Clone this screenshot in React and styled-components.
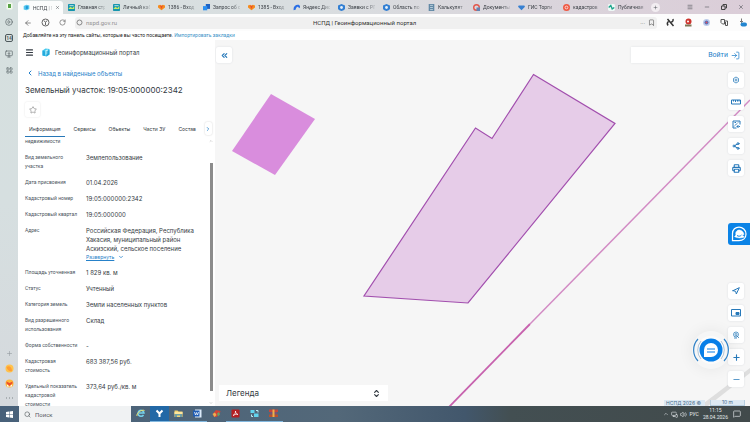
import React from "react";
import styled, { createGlobalStyle } from "styled-components";
import {
  ArrowLeft,
  Bookmark,
  ChevronDown,
  ChevronLeft,
  ChevronRight,
  ChevronUp,
  ChevronsLeft,
  ChevronsUpDown,
  CirclePlay,
  LayoutGrid,
  LogIn,
  Menu,
  Minus,
  MonitorDown,
  MessageSquare,
  MonitorSmartphone,
  Navigation,
  Plus,
  Printer,
  RotateCw,
  Search,
  Share2,
  Star,
  Volume2,
  X,
} from "lucide-react";

const GlobalStyle = createGlobalStyle`
  * { box-sizing: border-box; }

  body {
    margin: 0;
    font-family: Roboto, "Liberation Sans", sans-serif;
    color: #333a42;
    overflow: hidden;
  }

  button, input {
    font: inherit;
    color: inherit;
    border: none;
    background: none;
    padding: 0;
    margin: 0;
  }

  button { cursor: pointer; }
  svg { display: block; flex-shrink: 0; }
`;

// Shell
const Screen = styled.div`
  display: flex;
  flex-direction: column;
  height: 100vh;
  background: linear-gradient(90deg, #d7e0e0 0%, #d9dee0 40%, #dbcdd8 100%);
`;

const Workspace = styled.div`
  display: flex;
  flex: 1;
  min-height: 0;
`;

const Browser = styled.div`
  display: flex;
  flex-direction: column;
  flex: 1;
  min-width: 0;
`;

const Content = styled.div`
  display: flex;
  flex: 1;
  min-height: 0;
`;

// Browser side bar
const SideBar = styled.nav`
  width: 18px;
  padding: 2px 0 4px;
  display: flex;
  flex-direction: column;
  align-items: center;
  justify-content: space-between;
  background: linear-gradient(#d6e0df, #d6dfe0 50%, #d5d9dd);
  color: #586265;
`;

const SideGroup = styled.div`
  display: flex;
  flex-direction: column;
  align-items: center;
  gap: ${(p) => p.$gap}px;
`;

const SideButton = styled.button`
  width: 9px;
  height: 8px;
  display: flex;
  align-items: center;
  justify-content: center;
`;

const Counter = styled.span`
  width: 8px;
  height: 8px;
  border: 1px solid #4d585b;
  border-radius: 2px;
  font-size: 5px;
  font-weight: 700;
  line-height: 6px;
  text-align: center;
`;

const Profile = styled.span`
  width: 7px;
  height: 8px;
  border-radius: 2px;
  background: #f4faf2;
  border: 1px solid #e3efe2;
  display: grid;
  place-items: center;

  &::after {
    content: "";
    width: 3px;
    height: 4px;
    background: #58a344;
  }
`;

// Tabs
const TabStrip = styled.div`
  display: flex;
  height: 14px;
  font-size: 5px;
  line-height: 14px;
  color: #3a3f45;
`;

const Tab = styled.button`
  flex: 0 1 45px;
  min-width: 0;
  display: flex;
  align-items: center;
  gap: 3px;
  padding: 0 3px 0 5px;
  margin-top: ${(p) => (p.$active ? "1px" : "0")};
  border-radius: 3px 3px 0 0;
  background: ${(p) => (p.$active ? "#fbfcfc" : "transparent")};
`;

const TabText = styled.span`
  flex: 1;
  min-width: 0;
  white-space: nowrap;
  text-align: left;
  mask-image: linear-gradient(90deg, #000 70%, rgba(0, 0, 0, 0.2));
`;

const NewTab = styled.button`
  align-self: center;
  width: 9px;
  height: 9px;
  margin-left: 3px;
  border-radius: 50%;
  background: #f2edf1;
  display: grid;
  place-items: center;
`;

const WindowButtons = styled.div`
  display: flex;
  align-items: center;
  gap: 11px;
  margin-left: auto;
  padding-right: 6px;
`;

// Address row
const AddressRow = styled.div`
  display: flex;
  align-items: center;
  height: 17px;
  padding: 0 3px 0 6px;
  gap: 9px;
  background: #fcfcfc;
  color: #555;
`;

const AddressField = styled.div`
  flex: 1;
  height: 12px;
  display: flex;
  align-items: center;
  gap: 3px;
  padding: 0 2px 0 1px;
  border-radius: 3px;
  background: #f0f0f0;
  font-size: 6px;
`;

const AddressInput = styled.input`
  width: 60px;
  color: #929292;
  outline: none;
`;

const PageTitle = styled.span`
  flex: 1;
  padding-left: 164px;
  color: #333;
`;

const Extensions = styled.div`
  display: flex;
  align-items: center;
  gap: 9px;
`;

const BookmarkHint = styled.div`
  height: 9px;
  padding-left: 5px;
  font-size: 5px;
  line-height: 9px;
  color: #222;
  background: #fff;

  a {
    color: #3c93c8;
    text-decoration: none;
  }
`;

// Object panel
const Panel = styled.aside`
  width: 197px;
  display: flex;
  flex-direction: column;
  background: #fff;
  font-family: Inter, "Liberation Sans", sans-serif;
`;

const PanelHead = styled.header`
  display: flex;
  align-items: center;
  gap: 8px;
  height: 24px;
  padding-left: 7px;
  font-size: 6px;
`;

const Brand = styled.span`
  display: flex;
  align-items: center;
  gap: 5px;
`;

const BackLink = styled.a`
  display: flex;
  align-items: center;
  gap: 4px;
  height: 18px;
  padding-left: 8px;
  font-size: 6px;
  color: #2681c9;
  text-decoration: none;
`;

const ObjectTitle = styled.h1`
  margin: 0;
  padding-left: 7px;
  font-size: 8px;
  font-weight: 400;
  line-height: 16px;
`;

const FavButton = styled.button`
  width: 15px;
  height: 15px;
  margin: 4px 0 5px 7px;
  border-radius: 2px;
  box-shadow: 0 0 2px rgba(0, 0, 0, 0.12);
  display: grid;
  place-items: center;
  color: #888;
`;

const InfoTabs = styled.div`
  display: flex;
  align-items: stretch;
  height: 15px;
  padding-left: 7px;
  font-size: 5px;
`;

const InfoTab = styled.button`
  padding: 0 4px;
  margin-right: 5px;
  border-bottom: 1px solid ${(p) => (p.$active ? "#2878b8" : "transparent")};
  white-space: nowrap;
`;

const MoreTabs = styled.button`
  width: 13px;
  height: 13px;
  margin-left: auto;
  margin-right: 3px;
  border-radius: 2px;
  background: #fff;
  box-shadow: 0 0 2px rgba(0, 0, 0, 0.2);
  color: #2681c9;
  display: grid;
  place-items: center;
`;

const ScrollArea = styled.div`
  flex: 1;
  min-height: 0;
  display: flex;
`;

const Facts = styled.dl`
  flex: 1;
  margin: 0;
  padding-left: 7px;
  display: flex;
  flex-direction: column;
  gap: 7px;
  overflow: hidden;
`;

const Fact = styled.div`
  display: grid;
  flex-shrink: 0;
  grid-template-columns: 61px 1fr;
  line-height: 9px;
`;

const FactLabel = styled.dt`
  font-family: Roboto, sans-serif;
  font-size: 5px;
  padding-right: 7px;
  color: #4c5560;
`;

const FactValue = styled.dd`
  margin: 0;
  padding-right: 6px;
  font-size: 6px;
`;

const Expand = styled.button`
  display: flex;
  align-items: center;
  gap: 4px;
  font-size: 5px;
  line-height: 8px;
  color: #2681c9;
  text-decoration: underline;
`;

const ScrollBar = styled.div`
  width: 8px;
  display: flex;
  flex-direction: column;
  align-items: center;
  justify-content: space-between;
  padding: 2px 0 1px;
  color: #888;
`;

const ScrollThumb = styled.span`
  flex: 1;
  width: 3px;
  margin: 20px 0 10px;
  background: #8c8c8c;
`;

// Map
const MapArea = styled.main`
  position: relative;
  flex: 1;
  min-width: 0;
  overflow: hidden;
  background: #f6f6f6;
`;

const MapDrawing = styled.svg`
  position: absolute;
  inset: 0;
  width: 100%;
  height: 100%;
`;

const MapOverlay = styled.div`
  position: absolute;
  inset: 0;
  display: flex;
  flex-direction: column;
  justify-content: space-between;
`;

const MapTop = styled.div`
  display: flex;
  justify-content: space-between;
  align-items: flex-start;
  padding: 7px 6px 0 1px;
`;

const MapButton = styled.button`
  width: 16px;
  height: 16px;
  display: grid;
  place-items: center;
  border-radius: 2px;
  background: #fff;
  box-shadow: 0 0 2px rgba(60, 80, 110, 0.16);
  color: #2779ba;
`;

const LoginBar = styled.div`
  width: 113px;
  height: 16px;
  padding-right: 4px;
  display: flex;
  justify-content: flex-end;
  align-items: center;
  background: #fff;
  box-shadow: 0 0 2px rgba(60, 80, 110, 0.12);
  color: #2681c9;
  font-size: 7px;
`;

const LoginButton = styled.button`
  display: flex;
  align-items: center;
  gap: 3px;
`;

const Tools = styled.div`
  display: flex;
  flex-direction: column;
  gap: 6px;
`;

const MapRight = styled.div`
  flex: 1;
  display: flex;
  flex-direction: column;
  justify-content: space-between;
  align-items: flex-end;
  padding: 9px 6px 0;
`;

const MapBottom = styled.div`
  display: flex;
  justify-content: space-between;
  align-items: flex-end;
  margin-top: -2px;
`;

const Legend = styled.button`
  width: 169px;
  height: 16px;
  margin: 0 0 5px 4px;
  padding: 0 7px;
  display: flex;
  align-items: center;
  justify-content: space-between;
  background: #fff;
  font-family: Inter, sans-serif;
  font-size: 8px;
`;

const Attribution = styled.div`
  display: flex;
  gap: 5px;
  padding: 0 5px 0 0;
  font-family: Inter, sans-serif;
  font-size: 5px;
  line-height: 6px;
  color: #476d8d;
`;

const Copyright = styled.span`
  padding: 0 4px 0 2px;
  background: #dce9f3;
`;

const ScaleLine = styled.span`
  width: 35px;
  text-align: center;
  background: #dce9f3;
  border: 1px solid #b7cfe1;
  border-top: none;
  line-height: 5px;
`;

const Assistant = styled.button`
  position: absolute;
  right: 0;
  top: 183px;
  width: 22px;
  height: 22px;
  border-radius: 3px 0 0 3px;
  background: #0b83e6;
  display: grid;
  place-items: center;
`;

const ChatButton = styled.button`
  position: absolute;
  right: 20px;
  bottom: 37px;
  width: 38px;
  height: 38px;
  border-radius: 50%;
  box-shadow: 0 0 16px rgba(0, 0, 0, 0.07);
`;

// Windows taskbar
const TaskBar = styled.footer`
  height: 16px;
  display: flex;
  align-items: stretch;
  background: linear-gradient(90deg, #48617a 0%, #536879 45%, #42576c 62%, #434f52 68%, #414a4b 100%);
  color: #e7ebee;
`;

const StartButton = styled.button`
  width: 19px;
  display: grid;
  place-items: center;
`;

const SearchBox = styled.label`
  width: 112px;
  display: flex;
  align-items: center;
  gap: 4px;
  padding-left: 5px;
  background: #f0f2f3;
  color: #4c5256;
  font-size: 6px;

  input {
    width: 80px;
    outline: none;
  }

  input::placeholder {
    color: #5b6064;
    opacity: 1;
  }
`;

const TaskApp = styled.button`
  width: 19px;
  display: grid;
  place-items: center;
  background: ${(p) => (p.$active ? "#2268a6" : "transparent")};
  border-bottom: 1px solid ${(p) => (p.$open ? "#82b8df" : "transparent")};
`;

const Tray = styled.div`
  margin-left: auto;
  display: flex;
  align-items: center;
  gap: 2px;
  padding-right: 9px;
  font-size: 5px;
`;

const Clock = styled.time`
  margin: 0 3px 0 2px;
  line-height: 7px;
  text-align: center;
`;

const tabs = [
  { text: "НСПД | Г", kind: "nspd", active: true },
  { text: "Главная стр", kind: "square" },
  { text: "Личный каб", kind: "square" },
  { text: "1386 - Вход", kind: "heart" },
  { text: "Запрос об о", kind: "docs" },
  { text: "1385 - Вход", kind: "heart" },
  { text: "Яндекс Дис", kind: "disk" },
  { text: "Заявки с РП", kind: "shield" },
  { text: "Область по", kind: "shield" },
  { text: "Калькулят", kind: "calc" },
  { text: "Документы", kind: "ring" },
  { text: "ГИС Торги", kind: "gem" },
  { text: "кадастров", kind: "yandex" },
  { text: "Публичная", kind: "public" },
];

const facts = [
  { label: "Вид земельного участка", value: "Землепользование" },
  { label: "Дата присвоения", value: "01.04.2026" },
  { label: "Кадастровый номер", value: "19:05:000000:2342" },
  { label: "Кадастровый квартал", value: "19:05:000000" },
  {
    label: "Адрес",
    value: "Российская Федерация, Республика Хакасия, муниципальный район Аскизский, сельское поселение",
    expandable: true,
  },
  { label: "Площадь уточненная", value: "1 829 кв. м" },
  { label: "Статус", value: "Учтенный" },
  { label: "Категория земель", value: "Земли населенных пунктов" },
  { label: "Вид разрешенного использования", value: "Склад" },
  { label: "Форма собственности", value: "-" },
  { label: "Кадастровая стоимость", value: "683 387,56 руб." },
  { label: "Удельный показатель кадастровой стоимости", value: "373,64 руб./кв. м" },
];

const tabIcons = {
  nspd: (
    <>
      <path d="M1 3l4-2 4 1v5L5 9 1 8z" fill="#56c8ee" />
      <path d="M4 3h3v4H4z" fill="#2196d8" />
    </>
  ),
  square: (
    <>
      <rect width="10" height="10" rx="1" fill="#1695ae" />
      <path d="M1 6l3-2 2 2 3-3v4H1z" fill="#c7ec66" />
      <path d="M2 2h6v1H2z" fill="#fff" />
    </>
  ),
  heart: (
    <>
      <path d="M0 2l3-1 2 1 2-1 3 1v3L5 9 0 5z" fill="#f58b1f" />
      <path d="M3 2l2 1 2-1-2 5z" fill="#e94b2d" />
    </>
  ),
  docs: (
    <>
      <path d="M4 0h6v7H4z" fill="#1d62c4" />
      <path d="M0 3h6v6H0z" fill="#2b8ff1" />
    </>
  ),
  disk: <path d="M1 9C0 4 3 1 7 1c3 0 4 3 2 5L7 4C5 4 4 6 4 8z" fill="#2b6fe5" />,
  shield: (
    <>
      <path d="M5 0l5 2v4c0 2-2 3-5 4C2 9 0 8 0 6V2z" fill="#327fd3" />
      <circle cx="5" cy="5" r="2" fill="#e4f0fa" />
    </>
  ),
  calc: (
    <>
      <rect x="1" width="8" height="10" fill="#6289a5" />
      <path d="M3 2h4M3 5h4M3 8h4" stroke="#dceaf1" />
    </>
  ),
  ring: (
    <>
      <circle cx="5" cy="5" r="4" fill="none" stroke="#e2564b" strokeWidth="2" />
      <path d="M5 5h5v5H5z" fill="#6483b2" />
    </>
  ),
  gem: <path d="M1 2h8l1 2-5 5-5-5z" fill="#3880d1" />,
  yandex: (
    <>
      <circle cx="5" cy="5" r="5" fill="#ef5944" />
      <circle cx="5" cy="5" r="2" fill="none" stroke="#fff" />
    </>
  ),
  public: (
    <>
      <rect width="10" height="10" rx="2" fill="#eef8f6" />
      <path d="M1 5l3-3 2 5 3-2" fill="none" stroke="#20a58c" strokeWidth="2" />
    </>
  ),
};

function Favicon({ kind }) {
  return (
    <svg width="7" height="7" viewBox="0 0 10 10">
      {tabIcons[kind]}
    </svg>
  );
}

function NspdLogo() {
  return (
    <svg width="8" height="9" viewBox="0 0 16 18">
      <path d="M1 5l6-4 8 1v11l-6 4-8-2z" fill="#43c8ee" />
      <path d="M1 5l5 2v9l-5-1z" fill="#25a9dd" />
      <path d="M7 4l5-1v8l-5 3z" fill="#c8f6fb" />
      <path d="M9 6l6-2v9l-6 4z" fill="#1598cf" opacity=".7" />
    </svg>
  );
}

function BrowserSideBar() {
  return (
    <SideBar>
      <SideGroup $gap={8}>
        <Profile />
        <SideButton aria-label="Видео"><CirclePlay size={8} /></SideButton>
        <Counter>14</Counter>
        <SideButton aria-label="Загрузки"><MonitorDown size={8} /></SideButton>
        <SideButton aria-label="Приложения"><LayoutGrid size={7} /></SideButton>
      </SideGroup>
      <SideGroup $gap={7}>
        <SideButton aria-label="Добавить"><Plus size={7} color="#929a9e" /></SideButton>
        <SideButton aria-label="Заметки">
          <svg width="9" height="9" viewBox="0 0 18 18">
            <circle cx="9" cy="9" r="8" fill="#ffc34d" />
            <path d="M3 6c5-4 11 0 11 8-3 2-9 0-11-8z" fill="#ff9f35" />
          </svg>
        </SideButton>
        <SideButton aria-label="Почта">
          <svg width="9" height="9" viewBox="0 0 18 18">
            <circle cx="9" cy="9" r="8" fill="#ffb638" />
            <path d="M3 5l6 3 6-3v4l-6 5-6-5z" fill="#ed502b" />
            <path d="M4 11l5 4 5-4v4H4z" fill="#fff" />
          </svg>
        </SideButton>
        <SideButton aria-label="Ещё">
          <svg width="8" height="2" viewBox="0 0 8 2">
            <path d="M1 1h1M4 1h1M7 1h1" stroke="#7c8487" />
          </svg>
        </SideButton>
      </SideGroup>
    </SideBar>
  );
}

function BrowserTop() {
  return (
    <>
      <TabStrip>
        {tabs.map((tab, i) => (
          <Tab key={i} $active={tab.active}>
            <Favicon kind={tab.kind} />
            <TabText>{tab.text}</TabText>
            {tab.active && <X size={5} />}
          </Tab>
        ))}
        <NewTab aria-label="Новая вкладка"><Plus size={5} /></NewTab>
        <WindowButtons>
          <button aria-label="Меню"><Menu size={6} /></button>
          <button aria-label="Свернуть"><Minus size={6} /></button>
          <button aria-label="Развернуть">
            <svg width="6" height="6" viewBox="0 0 12 12" fill="none" stroke="#444" strokeWidth="2">
              <path d="M1 4h7v7H1zM4 4V1h7v7H8" />
            </svg>
          </button>
          <button aria-label="Закрыть"><X size={6} /></button>
        </WindowButtons>
      </TabStrip>
      <AddressRow>
        <button aria-label="Назад"><ArrowLeft size={8} /></button>
        <button aria-label="Яндекс">
          <svg width="9" height="9" viewBox="0 0 18 18" fill="none" stroke="#666" strokeWidth="2">
            <circle cx="9" cy="9" r="7" />
            <path d="M6 5l3 4 3-4M9 9v5" />
          </svg>
        </button>
        <button aria-label="Обновить"><RotateCw size={7} /></button>
        <AddressField>
          <svg width="7" height="7" viewBox="0 0 14 14" fill="none" stroke="#888" strokeWidth="2">
            <circle cx="7" cy="7" r="5" />
          </svg>
          <AddressInput aria-label="Адрес" defaultValue="nspd.gov.ru" />
          <PageTitle>НСПД | Геоинформационный портал</PageTitle>
          <span>···</span>
          <button aria-label="Закладка"><Bookmark size={7} /></button>
        </AddressField>
        <Extensions>
          <svg width="9" height="9" viewBox="0 0 18 18" stroke="#333" strokeWidth="3" fill="none">
            <path d="M3 2l12 14M14 2c1 5-2 6-4 6M5 7c-3 2-3 5-1 8" />
          </svg>
          <svg width="9" height="9" viewBox="0 0 18 18">
            <circle cx="9" cy="7" r="6" fill="#cc342d" />
            <path d="M2 13h13v4H2z" fill="#7f7656" />
            <circle cx="8" cy="7" r="2" fill="#fff" />
          </svg>
          <svg width="9" height="9" viewBox="0 0 18 18">
            <circle cx="9" cy="9" r="7" fill="#bccbea" />
            <circle cx="9" cy="9" r="4" fill="#5474bc" />
            <circle cx="9" cy="9" r="2" fill="#db4e5d" />
          </svg>
          <svg width="9" height="9" viewBox="0 0 18 18" fill="none" stroke="#555" strokeWidth="2">
            <path d="M2 3h7v9H5L2 9zM9 6h6v9h-4V8" />
          </svg>
          <svg width="9" height="9" viewBox="0 0 18 18">
            <path d="M7 1v8M4 6l3 3 3-3" fill="none" stroke="#777" strokeWidth="2" />
            <rect x="5" y="9" width="13" height="8" rx="4" fill="#2386d0" />
          </svg>
        </Extensions>
      </AddressRow>
      <BookmarkHint>
        Добавляйте на эту панель сайты, которые вы часто посещаете. <a href="#import">Импортировать закладки</a>
      </BookmarkHint>
    </>
  );
}

function ObjectPanel() {
  return (
    <Panel>
      <PanelHead>
        <button aria-label="Меню"><Menu size={9} strokeWidth={3} /></button>
        <Brand>
          <NspdLogo />
          Геоинформационный портал
        </Brand>
      </PanelHead>
      <BackLink href="#back">
        <ChevronLeft size={8} strokeWidth={3} />
        Назад в найденные объекты
      </BackLink>
      <ObjectTitle>Земельный участок: 19:05:000000:2342</ObjectTitle>
      <FavButton aria-label="В избранное"><Star size={8} /></FavButton>
      <InfoTabs>
        <InfoTab $active>Информация</InfoTab>
        <InfoTab>Сервисы</InfoTab>
        <InfoTab>Объекты</InfoTab>
        <InfoTab>Части ЗУ</InfoTab>
        <InfoTab>Состав</InfoTab>
        <MoreTabs aria-label="Ещё вкладки"><ChevronRight size={6} strokeWidth={3} /></MoreTabs>
      </InfoTabs>
      <ScrollArea>
        <Facts>
          <Fact>
            <FactLabel>недвижимости</FactLabel>
          </Fact>
          {facts.map((fact) => (
            <Fact key={fact.label}>
              <FactLabel>{fact.label}</FactLabel>
              <FactValue>
                {fact.value}
                {fact.expandable && (
                  <Expand>
                    Развернуть <ChevronDown size={6} strokeWidth={3} />
                  </Expand>
                )}
              </FactValue>
            </Fact>
          ))}
        </Facts>
        <ScrollBar>
          <ChevronUp size={4} />
          <ScrollThumb />
          <ChevronDown size={4} />
        </ScrollBar>
      </ScrollArea>
    </Panel>
  );
}

function LandMap() {
  return (
    <MapArea>
      <MapDrawing viewBox="215 40 535 366" preserveAspectRatio="xMidYMid slice">
        <path d="M700 406l50-38v5l-42 33z" fill="#dedede" />
        <path d="M271 94l44 25-40 56-43-24z" fill="#d98ddd" />
        <path
          d="M533.500 74.500L615 123.500 468 303 364 296 475.500 128 492 138.500z"
          fill="#e6cce8"
          stroke="#a24fae"
          strokeWidth="1.200"
        />
        <path d="M449 407L530 324" stroke="#c762ae" strokeWidth="1.800" />
        <path d="M530 324L750 100" stroke="#d28bc4" strokeWidth="1.500" />
      </MapDrawing>
      <MapOverlay>
        <MapTop>
          <MapButton aria-label="Скрыть панель"><ChevronsLeft size={9} strokeWidth={3} /></MapButton>
          <LoginBar>
            <LoginButton>
              Войти <LogIn size={9} />
            </LoginButton>
          </LoginBar>
        </MapTop>
        <MapRight>
          <Tools>
            <MapButton aria-label="Слои">
              <svg width="8" height="8" viewBox="0 0 16 16" fill="none" stroke="currentColor" strokeWidth="1.500">
                <path d="M8 2l5 3v6l-5 3-5-3V5z" />
                <circle cx="8" cy="8" r="2" />
              </svg>
            </MapButton>
            <MapButton aria-label="Линейка">
              <svg width="10" height="8" viewBox="0 0 20 16" fill="none" stroke="currentColor" strokeWidth="2">
                <path d="M1 4h18v8H1zM5 4v3M9 4v4M13 4v3M16 4v3" />
              </svg>
            </MapButton>
            <MapButton aria-label="Выделить область">
              <svg width="9" height="9" viewBox="0 0 18 18" fill="none" stroke="currentColor" strokeWidth="2">
                <path d="M2 2h14v7M2 2v14h7" />
                <path d="M4 13L13 4M5 5h3M12 10v6M9 13h7" strokeDasharray="3 1" />
              </svg>
            </MapButton>
            <MapButton aria-label="Поделиться"><Share2 size={8} strokeWidth={3} /></MapButton>
            <MapButton aria-label="Печать"><Printer size={9} strokeWidth={3} /></MapButton>
          </Tools>
          <Tools>
            <MapButton aria-label="Моё местоположение"><Navigation size={8} strokeWidth={3} /></MapButton>
            <MapButton aria-label="Обзорная карта">
              <svg width="10" height="8" viewBox="0 0 20 16" fill="none" stroke="currentColor" strokeWidth="2">
                <path d="M1 1h18v13H1z" />
                <path d="M10 7h6v4h-6z" fill="currentColor" />
              </svg>
            </MapButton>
            <MapButton aria-label="Поиск на карте">
              <svg width="8" height="8" viewBox="0 0 16 16" fill="none" stroke="currentColor" strokeWidth="1.500">
                <circle cx="8" cy="7" r="5" />
                <circle cx="8" cy="7" r="2" />
                <path d="M9 9l5 5M4 14h6" />
              </svg>
            </MapButton>
            <MapButton aria-label="Приблизить"><Plus size={9} strokeWidth={3} /></MapButton>
            <MapButton aria-label="Отдалить"><Minus size={9} /></MapButton>
          </Tools>
        </MapRight>
        <MapBottom>
          <Legend>
            Легенда <ChevronsUpDown size={9} strokeWidth={3} />
          </Legend>
          <Attribution>
            <Copyright>НСПД 2026 ©</Copyright>
            <ScaleLine>10 m</ScaleLine>
          </Attribution>
        </MapBottom>
      </MapOverlay>
      <Assistant aria-label="Помощник">
        <svg width="18" height="18" viewBox="0 0 36 36" fill="none" stroke="#fff">
          <path d="M5 31V17C5 9 11 4 18 4s14 6 14 14-6 13-14 13z" strokeWidth="2.500" />
          <path d="M9 23l3-3c-2-6 2-10 7-10 5 1 8 4 9 9l-4 1 5 4c-5 2-14 3-20-1z" fill="#fff" />
          <path d="M14 21c3 2 6 2 9-1" stroke="#0b83e6" strokeWidth="2" />
        </svg>
      </Assistant>
      <ChatButton aria-label="Чат">
        <svg width="38" height="38" viewBox="0 0 38 38" fill="none">
          <circle cx="19" cy="19" r="14" fill="#fff" opacity=".6" />
          <circle cx="19" cy="19" r="11.500" fill="#087fe8" />
          <path d="M12 26v-7a7 7 0 1 1 7 7z" fill="#fff" />
          <path d="M15 18h8M15 21h8" stroke="#087fe8" strokeWidth="1.200" />
          <path d="M6 8a16 16 0 0 0 0 22M32 8a16 16 0 0 1 0 22" stroke="#3383c7" strokeWidth="1.200" />
          <path d="M9 10a14 14 0 0 0 0 18M29 10a14 14 0 0 1 0 18" stroke="#9ab4cc" strokeWidth=".8" />
        </svg>
      </ChatButton>
    </MapArea>
  );
}

const apps = [
  {
    name: "Internet Explorer",
    icon: (
      <>
        <path d="M15 12a6 6 0 1 1 1-4H6" fill="none" stroke="#76d2ec" strokeWidth="3" />
        <path d="M2 14C0 9 11 0 17 3" fill="none" stroke="#e8df70" strokeWidth="2" />
      </>
    ),
  },
  {
    name: "Яндекс Браузер",
    active: true,
    open: true,
    icon: <path d="M3 3l6 6 6-6M9 9v7" fill="none" stroke="#fff" strokeWidth="4" />,
  },
  {
    name: "Проводник",
    open: true,
    icon: (
      <>
        <path d="M1 3h6l2 2h8v11H1z" fill="#f3d474" />
        <path d="M2 9h14v7h-4v-3H6v3H2z" fill="#6e9fa6" />
        <path d="M1 6h16v4H1z" fill="#ffe69a" />
      </>
    ),
  },
  {
    name: "Word",
    open: true,
    icon: (
      <>
        <path d="M4 1h13v16H4z" fill="#dcebfa" />
        <path d="M0 3h13v12H0z" fill="#1f5db5" />
        <path d="M3 6l2 6 2-5 2 5 2-6" fill="none" stroke="#fff" strokeWidth="1.500" />
      </>
    ),
  },
  {
    name: "Графика",
    icon: (
      <>
        <path d="M2 9l6-7 9 2-2 7-6 5-6-1z" fill="#d24235" />
        <path d="M1 10l5-3 3 5-4 4z" fill="#e8b052" />
        <path d="M10 9l4-3 2 5-4 4z" fill="#64a36c" />
      </>
    ),
  },
  {
    name: "Acrobat",
    open: true,
    icon: (
      <>
        <rect x="1" y="1" width="16" height="16" rx="2" fill="#b41f22" />
        <path d="M4 13c5-3 5-6 5-9 0 4 2 6 5 7-4-1-6 0-10 2z" fill="none" stroke="#fff" strokeWidth="1.500" />
      </>
    ),
  },
  {
    name: "Компьютеры",
    open: true,
    icon: (
      <>
        <path d="M1 2h8v6H1zM8 9h9v7H8z" fill="#62d4ed" />
        <path d="M12 3h4v4M3 11v4h3" fill="none" stroke="#b8eef7" strokeWidth="2" />
      </>
    ),
  },
  {
    name: "WinRAR",
    open: true,
    icon: (
      <>
        <path d="M0 1h18v5H0z" fill="#c4473c" />
        <path d="M2 6h14v5H2z" fill="#7a5273" />
        <path d="M0 11h18v5H0z" fill="#b8502f" />
        <path d="M7 1h4v15H7z" fill="#edb14b" />
      </>
    ),
  },
];

function WindowsTaskBar() {
  return (
    <TaskBar>
      <StartButton aria-label="Пуск">
        <svg width="7" height="7" viewBox="0 0 14 14" fill="#fff">
          <path d="M0 2l6-1v6H0zM7 1l7-1v7H7zM0 8h6v5l-6-1zM7 8h7v6l-7-1z" />
        </svg>
      </StartButton>
      <SearchBox>
        <Search size={7} />
        <input aria-label="Поиск" placeholder="Поиск" />
      </SearchBox>
      {apps.map((app) => (
        <TaskApp key={app.name} aria-label={app.name} $active={app.active} $open={app.open}>
          <svg width="9" height="9" viewBox="0 0 18 18">{app.icon}</svg>
        </TaskApp>
      ))}
      <Tray>
        <ChevronUp size={6} />
        <MonitorSmartphone size={7} />
        <Volume2 size={7} />
        <span>РУС</span>
        <Clock>
          11:15
          <br />
          28.04.2026
        </Clock>
        <MessageSquare size={8} />
      </Tray>
    </TaskBar>
  );
}

function App() {
  return (
    <Screen>
      <GlobalStyle />
      <Workspace>
        <BrowserSideBar />
        <Browser>
          <BrowserTop />
          <Content>
            <ObjectPanel />
            <LandMap />
          </Content>
        </Browser>
      </Workspace>
      <WindowsTaskBar />
    </Screen>
  );
}

export default App;
